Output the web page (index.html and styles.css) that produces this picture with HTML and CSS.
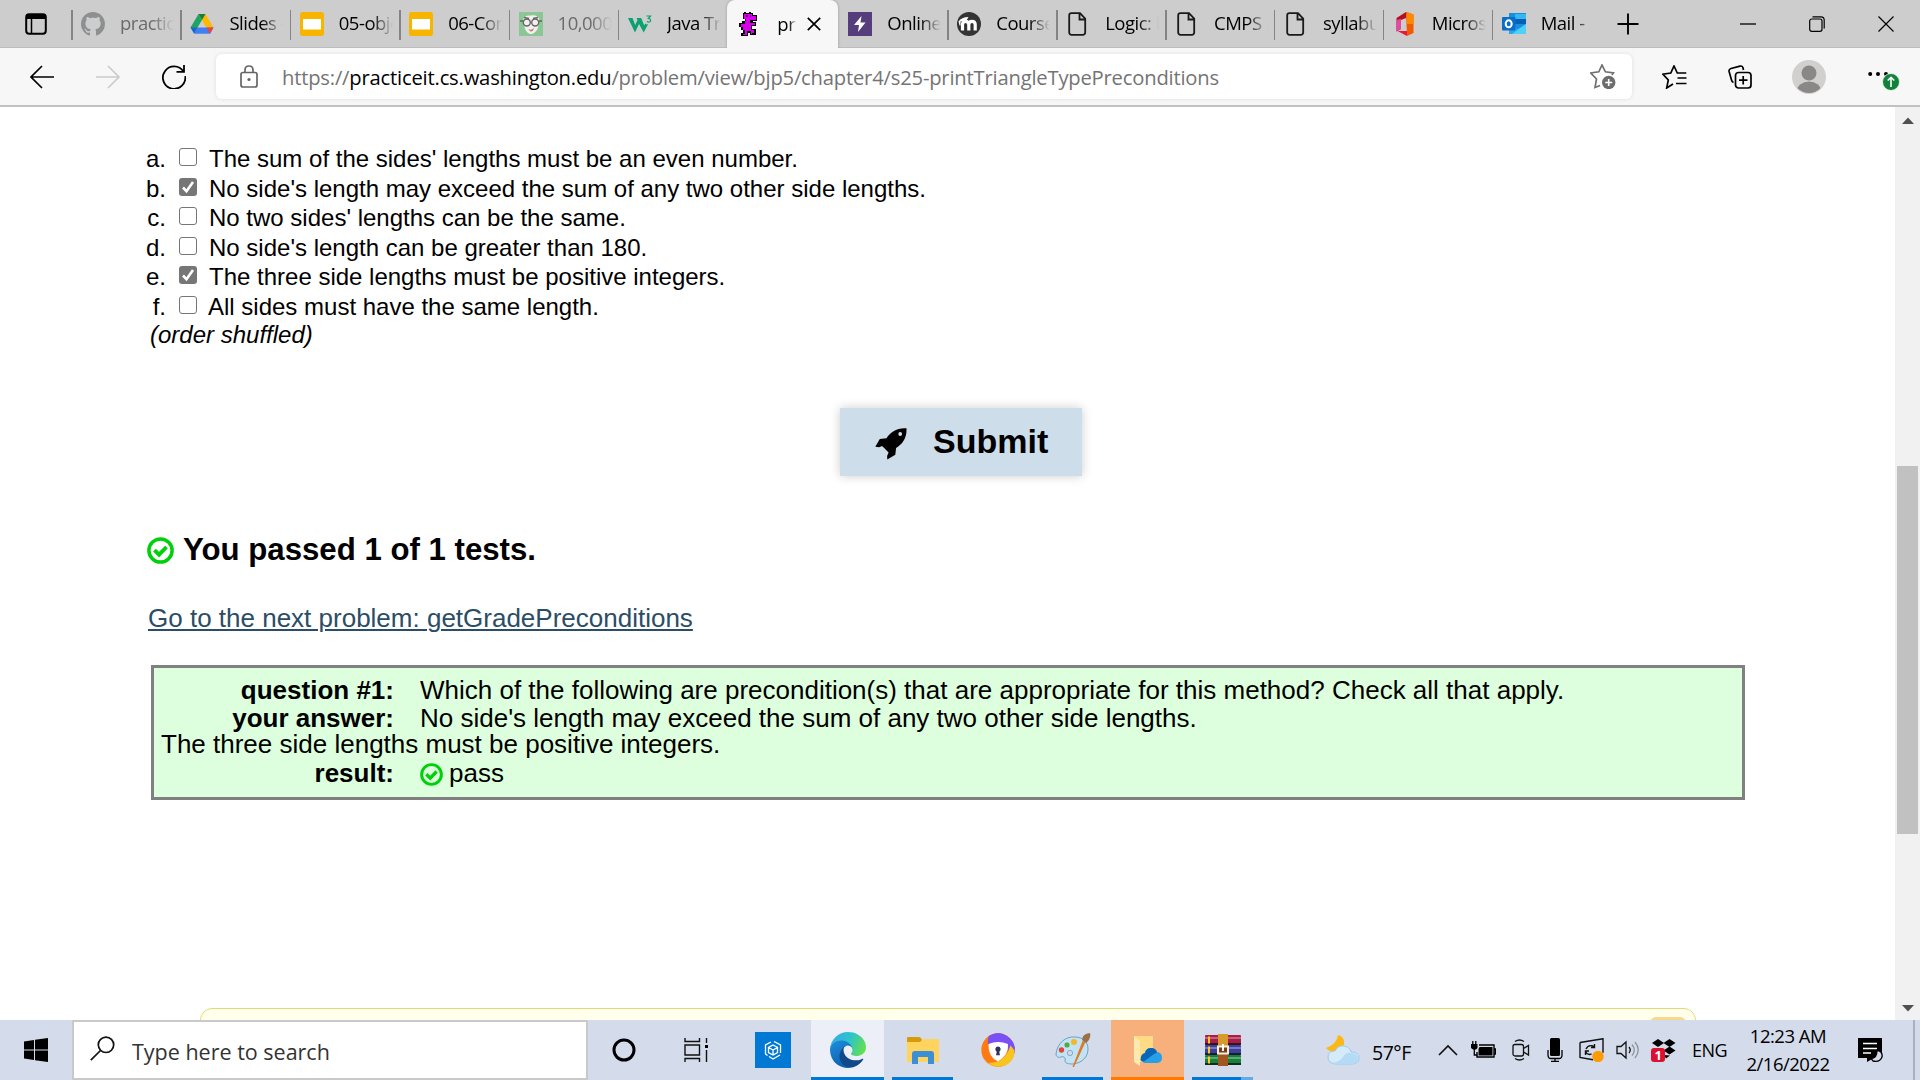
FILE: index.html
```html
<!DOCTYPE html>
<html lang="en">
<head>
<meta charset="utf-8">
<title>Practice-It</title>
<link rel="stylesheet" href="styles.css">
</head>
<body>
<svg class="defs" aria-hidden="true">
  <symbol id="page" viewBox="0 0 24 24"><path d="M5.500 1.200h8.500l5.200 5.500v13.800a2.300 2.300 0 0 1-2.300 2.300H5.500a2.300 2.300 0 0 1-2.300-2.300V3.500a2.300 2.300 0 0 1 2.300-2.300zM13.500 1.200v6.300h5.700" fill="none" stroke="#1a1a1a" stroke-width="1.800"/></symbol>
  <symbol id="slides" viewBox="0 0 24 24"><rect width="24" height="24" rx="2.500" fill="#f7b500"/><rect x="3" y="7" width="18" height="10.500" fill="#fff"/></symbol>
  <symbol id="pass" viewBox="0 0 27 27"><circle cx="13.500" cy="13.500" r="11.600" fill="none" stroke="#00d00a" stroke-width="3.500"/><path d="M7.500 13.200l4.500 4.500 7.500-7.700" fill="none" stroke="#00d00a" stroke-width="3.900"/></symbol>
</svg>

<div class="tabstrip ui">
  <div class="actions"><svg width="22" height="22" viewBox="0 0 22 22"><rect x="1.200" y="1.200" width="19.600" height="19.600" rx="3" fill="none" stroke="#000" stroke-width="2"/><path d="M1 6V3.500Q1 1 3.500 1h15Q21 1 21 3.500V6z"/><path d="M6.500 6v15" stroke="#000" stroke-width="1.500"/></svg></div>
  <div class="tab asleep"><svg class="fav" viewBox="0 0 16 16"><path fill="#8d8f91" d="M8 0C3.580 0 0 3.580 0 8c0 3.540 2.290 6.530 5.470 7.590.4.070.55-.17.55-.38 0-.19-.01-.82-.01-1.490-2.010.37-2.530-.49-2.690-.94-.09-.23-.48-.94-.82-1.130-.28-.15-.68-.52-.01-.53.63-.01 1.080.58 1.230.82.72 1.210 1.870.87 2.330.66.070-.52.28-.87.51-1.070-1.780-.2-3.640-.89-3.640-3.950 0-.87.31-1.590.82-2.150-.08-.2-.36-1.020.08-2.120 0 0 .67-.21 2.200.82.64-.18 1.320-.27 2-.27s1.360.09 2 .27c1.530-1.040 2.200-.82 2.200-.82.44 1.100.16 1.920.08 2.120.51.56.82 1.270.82 2.150 0 3.070-1.870 3.750-3.650 3.950.29.25.54.73.54 1.480 0 1.070-.01 1.930-.01 2.200 0 .21.15.46.55.38A8.010 8.010 0 0 0 16 8c0-4.420-3.580-8-8-8z"/></svg><span>practice</span></div>
  <div class="tab"><svg class="fav" viewBox="0 0 24 24"><path d="M8.500 2h7l-7.800 13.300L4.200 21 .5 15.500z" fill="#1fa463"/><path d="M8.500 2h7L23.500 15.500h-7.300z" fill="#ffba00"/><path d="M15.500 2L12 8 8.500 2z" fill="#15803c"/><path d="M7.500 15.500h16L20 21.800H4.200z" fill="#3f7ef3"/><path d="M16.500 15.500h7L20 21.800z" fill="#e8453c"/><path d="M.5 15.500h7L4.200 21.800z" fill="#1b66d2"/></svg><span>Slides -</span></div>
  <div class="tab"><svg class="fav"><use href="#slides"/></svg><span>05-obje</span></div>
  <div class="tab"><svg class="fav"><use href="#slides"/></svg><span>06-Con</span></div>
  <div class="tab asleep"><svg class="fav" viewBox="0 0 24 24"><rect width="24" height="24" fill="#8bc795"/><path d="M4 8Q5 3 12 3.500 19 2.500 20.500 8l-2 9q-3 5-6.500 5t-6-5z" fill="#f2f0ee"/><g fill="none" stroke="#666" stroke-width="1.400"><circle cx="7.800" cy="10.500" r="3.500"/><circle cx="16.200" cy="10.500" r="3.500"/><path d="M1 9h3M20 9h3M5 5.500l5 1M14 6.500l5-1"/></g><path d="M9 17q3 2 6-1-1 4-3.500 3.500z" fill="#c77"/></svg><span>10,000</span></div>
  <div class="tab"><svg class="fav" viewBox="0 0 24 24"><path d="M0 6h4.500l2.700 7L9.500 8 8.600 6h4.600l3 7.500 1-2 1.500 1 1.500-.5-4.500 8.500L11 12l-4 8.500z" fill="#0aa170"/><path d="M18.500 4h4l-2.200 2.500q2.600.2 2.200 2.500-.8 1.800-3.700.5" fill="none" stroke="#0aa170" stroke-width="1.200"/></svg><span>Java Try</span></div>
  <div class="tab active"><svg class="fav" viewBox="0 0 24 24" shape-rendering="crispEdges"><path d="M6 0h2v1h3V0h2v1h2v2h4v6h-4v1h3v4h-4v3h4v6h-6v-2h-2v3H3v-3h2v-3H3v-3H1v-4h3V9h3V7H5V1h1z"/><path d="M6 2h8v2h4v4h-6v3h5v2h-4v5h3v3h-2v1h-1v-3H9v4H5v-1h2v-4H5v-3H3v-3h4v-3h1V7H6z" fill="#d900ee"/><path d="M8 3h2v2H8zM12 3h1v2h-1z" fill="#6d007a"/></svg><span>pr</span><svg class="x" viewBox="0 0 14 14"><path d="M.8.8l12.400 12.400M13.200.8L.8 13.200" stroke="#000" stroke-width="1.700"/></svg></div>
  <div class="tab first"><svg class="fav" viewBox="0 0 24 24"><rect width="24" height="24" fill="#563d7c"/><path d="M13.500 4L6 13h5l-1 7 7.500-9.500h-5z" fill="#fff"/></svg><span>Online</span></div>
  <div class="tab"><svg class="fav" viewBox="0 0 24 24"><circle cx="12" cy="12" r="12" fill="#333"/><path d="M5.500 18.500v-6q0-3.200 3-3.200t3.300 3.200v6M11.800 12.500q0-3.200 3.200-3.200t3.200 3.200v6" fill="none" stroke="#fff" stroke-width="3.200"/><path d="M1.500 9.500q3-4.500 10-4.500l-2 3.500-6 1v4h-1z" fill="#fff"/></svg><span>Course</span></div>
  <div class="tab"><svg class="fav"><use href="#page"/></svg><span>Logic: I</span></div>
  <div class="tab"><svg class="fav"><use href="#page"/></svg><span>CMPS 2</span></div>
  <div class="tab"><svg class="fav"><use href="#page"/></svg><span>syllabu</span></div>
  <div class="tab"><svg class="fav" viewBox="0 0 24 24"><path d="M13 0l7.500 2.500v18.500L14 24z" fill="#f05a00"/><path d="M13 0v6L8 8v9l-4.500 2.500V6z" fill="#b5101b"/><path d="M3.500 8L8 7v10l-4.500 2.500z" fill="#e04aa0"/><path d="M4.500 19H14v5z" fill="#e8173c"/><path d="M14 0l6.500 2.500V12H14z" fill="#ff8a00"/></svg><span>Micros</span></div>
  <div class="tab"><svg class="fav" viewBox="0 0 24 24"><path d="M7 1h17v21H7z" fill="#1490df"/><path d="M13 2h11v5H13z" fill="#35b8f1"/><path d="M13 7h11v5H13z" fill="#0a5fb4"/><path d="M7 22V12l8.500 5 8.500-5v10z" fill="#28a8ea"/><path d="M24 22V12L10 22z" fill="#50d0f8"/><rect y="5" width="13.500" height="13.500" rx="1" fill="#0a6ec8"/><ellipse cx="6.700" cy="11.800" rx="3" ry="3.500" fill="none" stroke="#fff" stroke-width="2"/></svg><span>Mail -</span></div>
  <div class="newtab"><svg width="22" height="22" viewBox="0 0 22 22"><path d="M11 .5v21M.5 11h21" stroke="#000" stroke-width="1.900"/></svg></div>
  <div class="winctl">
    <svg viewBox="0 0 16 16"><path d="M0 8h16" stroke="#000" stroke-width="1.300"/></svg>
    <svg viewBox="0 0 16 16"><rect x=".7" y="3" width="12.300" height="12.300" rx="2" fill="none" stroke="#000" stroke-width="1.200"/><path d="M3.500.8h8.500q3.200 0 3.200 3.200v8.500" fill="none" stroke="#000" stroke-width="1.200"/></svg>
    <svg viewBox="0 0 16 16"><path d="M.5.5l15 15M15.500.5l-15 15" stroke="#000" stroke-width="1.200"/></svg>
  </div>
</div>

<div class="toolbar ui">
  <svg class="back" viewBox="0 0 24 24"><path d="M24 12H1.500M12 1L1 12l11 11" fill="none" stroke="#000" stroke-width="1.700"/></svg>
  <svg class="fwd" viewBox="0 0 24 24"><path d="M0 12h22.500M12 1l11 11-11 11" fill="none" stroke="#ccc" stroke-width="1.700"/></svg>
  <svg class="reload" viewBox="0 0 24 24"><path d="M21.500 6.500A11.200 11.200 0 1 0 23.200 11M22 0v6.800h-7.500" fill="none" stroke="#000" stroke-width="1.800"/></svg>
  <div class="address">
    <svg class="lock" viewBox="0 0 18 23"><rect x="1" y="7.500" width="16" height="14.500" rx="2" fill="none" stroke="#666" stroke-width="1.700"/><path d="M5 7.500V5q0-4 4-4t4 4v2.500" fill="none" stroke="#666" stroke-width="1.700"/><circle cx="9" cy="14.500" r="1.600" fill="#666"/></svg>
    <span class="url">https://<b>practiceit.cs.washington.edu</b>/problem/view/bjp5/chapter4/s25-printTriangleTypePreconditions</span>
    <svg class="addfav" viewBox="0 0 26 25"><path d="M10 21.500l-5 2L6.500 15 .8 9l8-1.200L12 1l3.400 6.800 8 1.200-1.500 2" fill="none" stroke="#707070" stroke-width="1.700"/><circle cx="18.700" cy="18.500" r="6.700" fill="#6d6d6d"/><path d="M18.700 15v7M15.200 18.500h7" stroke="#fff" stroke-width="1.600"/></svg>
  </div>
  <svg class="favs" viewBox="0 0 25 24"><path d="M11 19l-6.300 4L6.300 15 .8 9.200l8-1.200L12 1l3.300 7h9M15.500 13h9M14 18.500h10.500" fill="none" stroke="#000" stroke-width="1.700"/></svg>
  <svg class="coll" viewBox="0 0 24 24"><rect x="7.500" y="7.500" width="15.500" height="15.500" rx="3" fill="none" stroke="#000" stroke-width="1.700"/><path d="M15.200 11v8.500M11 15.200h8.500M15.500 5l-.6-2.500Q14.200.6 12 1.100L3 3.500Q.6 4.200 1.100 6.500L3.500 15q.5 2 2 2.300" fill="none" stroke="#000" stroke-width="1.700"/></svg>
  <svg class="avatar" viewBox="0 0 34 34"><clipPath id="av"><circle cx="17" cy="17" r="16"/></clipPath><circle cx="17" cy="17" r="17" fill="#d2d0ce"/><g clip-path="url(#av)" fill="#8a8886"><circle cx="17" cy="13" r="7.500"/><ellipse cx="17" cy="31" rx="12" ry="9.500"/></g></svg>
  <svg class="more" viewBox="0 0 32 24"><circle cx="2.200" cy="4" r="2"/><circle cx="10" cy="4" r="2"/><circle cx="18" cy="4" r="2"/><circle cx="23" cy="12" r="8.500" fill="#12823b" stroke="#f7f7f7" stroke-width=".8"/><path d="M23 17V7.500M19.700 10.500L23 7.300l3.300 3.200" fill="none" stroke="#fff" stroke-width="1.600"/></svg>
</div>

<div class="viewport">
  <main>
    <ol class="choices">
      <li><i>a.</i><s></s>The sum of the sides' lengths must be an even number.</li>
      <li><i>b.</i><s class="on"><svg viewBox="0 0 18 18"><path d="M4 9.500l3.500 3.800L14 4" fill="none" stroke="#fff" stroke-width="2.600"/></svg></s>No side's length may exceed the sum of any two other side lengths.</li>
      <li><i>c.</i><s></s>No two sides' lengths can be the same.</li>
      <li><i>d.</i><s></s>No side's length can be greater than 180.</li>
      <li><i>e.</i><s class="on"><svg viewBox="0 0 18 18"><path d="M4 9.500l3.500 3.800L14 4" fill="none" stroke="#fff" stroke-width="2.600"/></svg></s>The three side lengths must be positive integers.</li>
      <li class="last"><i>f.</i><s></s>All sides must have the same length.</li>
    </ol>
    <em class="shuffled">(order shuffled)</em>
    <div class="submit"><svg viewBox="0 0 32 32"><path d="M31.500.3C22-.5 15 4.500 11.500 10.200L4.800 11 .3 18.700l3.800.5 3-1.200 6.500 6.500-1.500 3.500.2 3.500 8-4.800.8-6.700C27.500 16 32 10 31.500.3z"/><circle cx="25.200" cy="6" r="1.900" fill="#cddde9"/></svg><span>Submit</span></div>
    <h3><svg class="ok"><use href="#pass"/></svg>You passed 1 of 1 tests.</h3>
    <a class="next">Go to the next problem: getGradePreconditions</a>
    <section class="result">
      <div class="row r1"><b>question #1:</b><span>Which of the following are precondition(s) that are appropriate for this method? Check all that apply.</span></div>
      <div class="row r2"><b>your answer:</b><span>No side's length may exceed the sum of any two other side lengths.</span></div>
      <div class="row r3">The three side lengths must be positive integers.</div>
      <div class="row"><b>result:</b><span><svg class="ok"><use href="#pass"/></svg>pass</span></div>
    </section>
    <div class="notice"><div></div></div>
  </main>
  <div class="scroll">
    <svg viewBox="0 0 12 7"><path d="M0 7l6-6.500L12 7z" fill="#505050"/></svg>
    <div class="thumb"></div>
    <svg viewBox="0 0 12 7"><path d="M0 0l6 6.500L12 0z" fill="#505050"/></svg>
  </div>
</div>

<div class="taskbar ui">
  <div class="start"><svg width="24" height="24" viewBox="0 0 24 24"><path d="M0 3.400L10 2v9.500H0zM11 1.800L24 0v11.500H11zM0 12.500h10V22L0 20.600zM11 12.500h13V24l-13-1.800z"/></svg></div>
  <div class="search"><svg width="25" height="25" viewBox="0 0 25 25"><circle cx="16" cy="8.800" r="7.700" fill="none" stroke="#111" stroke-width="1.700"/><path d="M10.500 14.500L.8 24.200" stroke="#111" stroke-width="1.700"/></svg><span>Type here to search</span></div>
  <div class="apps">
    <div class="app cortana"><svg width="24" height="24" viewBox="0 0 24 24"><circle cx="12" cy="12" r="10" fill="none" stroke="#000" stroke-width="3"/></svg></div>
    <div class="app views"><svg width="24" height="24" viewBox="0 0 24 24"><path d="M1 0v3.500h14.500V0M1 24v-3.500h14.500V24M1 7h14.500v10H1zM22.500 0v5M22.500 12v12" fill="none" stroke="#111" stroke-width="1.400"/><path d="M21 7h3v3h-3z"/></svg></div>
    <div class="app"><svg width="36" height="36" viewBox="0 0 36 36"><path fill="#0078d4" d="M0 0h36v36H0z"/><path d="M16 10l-5.500 3v9l2 1.500M19 9.500l6.500 3.500v8M25 23l-7 4-4-2.500M18 13l4.500 2.500v5L18 23l-4.500-2.500v-5zM13.500 15.500L18 18l4.500-2.500M18 18v5" fill="none" stroke="#fff" stroke-width="1.300"/></svg></div>
    <div class="app edge"><svg width="36" height="36" viewBox="0 0 256 256">
      <defs>
        <linearGradient id="e1" x1="0" y1=".3" x2="1" y2=".6"><stop offset="0" stop-color="#35a9e8"/><stop offset=".5" stop-color="#2cc4cc"/><stop offset="1" stop-color="#66e04c"/></linearGradient>
        <linearGradient id="e2" x1=".2" y1="0" x2=".6" y2="1"><stop offset="0" stop-color="#1b8fdc"/><stop offset="1" stop-color="#0f5cab"/></linearGradient>
      </defs>
      <path d="M231 190.500c-3.400 1.800-6.900 3.400-10.500 4.700a101.700 101.700 0 0 1-35.900 6.500c-47.300 0-88.500-32.500-88.500-74.300 0-11.400 6.400-21.900 16.400-27.300-42.800 1.800-53.800 46.400-53.800 72.500 0 73.900 68.100 81.400 82.800 81.400 7.900 0 19.800-2.300 27-4.600l1.300-.4a128.300 128.300 0 0 0 66.600-52.800 4 4 0 0 0-5.400-5.700z" fill="#11488a"/>
      <path d="M105.700 241.400a79.200 79.200 0 0 1-22.700-21.300 80.700 80.700 0 0 1 29.500-120c3.200-1.500 8.500-4.100 15.600-4a32.400 32.400 0 0 1 25.700 13 31.900 31.900 0 0 1 6.300 18.700c0-.2 24.500-79.600-80-79.600-43.900 0-80 41.700-80 78.200a130.200 130.200 0 0 0 12.100 56 128 128 0 0 0 156.400 67 75.500 75.500 0 0 1-62.800-8z" fill="url(#e2)"/>
      <path d="M152.300 148.900c-.8 1-3.300 2.500-3.300 5.700 0 2.600 1.700 5.100 4.700 7.200 14.400 10 41.500 8.700 41.600 8.700a59.600 59.600 0 0 0 30.300-8.300 61.400 61.400 0 0 0 30.400-52.900c.3-22.400-8-37.300-11.300-43.900C223.500 23.900 177.700 0 128 0A128 128 0 0 0 0 126.200c.5-36.500 36.800-66 80-66 3.500 0 23.500.3 42 10.100 16.300 8.600 24.900 18.900 30.800 29.200 6.200 10.700 7.300 24.100 7.300 29.500 0 5.300-2.700 13.300-7.800 19.900z" fill="url(#e1)"/></svg></div>
    <div class="app open"><svg width="32" height="27" viewBox="0 0 32 27"><path d="M0 1q0-1 1-1h11q2 0 3 3v4H0z" fill="#d99a07"/><path d="M0 5h13l3-3h15q1 0 1 1v21q0 1-1 1H1q-1 0-1-1z" fill="#ffd45e"/><path d="M5 27V17q0-3 3-3h16q3 0 3 3v10h-6v-7H11v7z" fill="#3a8fd6"/></svg></div>
    <div class="app"><svg width="34" height="34" viewBox="0 0 34 34"><circle cx="17" cy="17" r="16.700" fill="#ff7a12"/><path d="M8 3A16.700 16.700 0 0 1 33.500 20l-4 3Q27 12 18 9 12 7.500 7.500 12 6 7 8 3z" fill="#7a4ff5"/><path d="M33.700 17Q33 33 17 33.700q-6-.3-9.500-4Q20 31 27 19l3-8q3.500 2 3.700 6z" fill="#f7c51e"/><path d="M8 3A16.700 16.700 0 0 1 33.700 18Q30 12 27 10.500L17 9l-9.500 2z" fill="#7a4ff5"/><path d="M7.500 11Q17 7 27 11q1 11-10 17.500Q7 24 7.500 11z" fill="#fff"/><path d="M17 13.500a2.800 2.800 0 0 1 1.300 5.200l.6 3.600h-3.800l.6-3.600a2.800 2.800 0 0 1 1.300-5.200z" fill="#2b3458"/></svg></div>
    <div class="app open"><svg width="36" height="36" viewBox="0 0 36 36"><path d="M20 5C10 4 2 12 1 22c0 3 3 4 5 3 3-1 5 1 4 4 0 2 3 3 8 3 9-1 15-7 15-15 0-7-5-12-13-12z" fill="#c3e2f3" stroke="#6aa3c4" stroke-width="1"/><circle cx="15" cy="21" r="2.600" fill="#d4dbea" stroke="#7faac3"/><rect x="9.500" y="10.500" width="5" height="5" rx="2" fill="#4cae3d"/><circle cx="19" cy="10" r="3" fill="#f4b728"/><circle cx="6.500" cy="18" r="2.700" fill="#e0463a"/><path d="M17.500 35l10-26 3 1-11.500 25z" fill="#e07a24"/><path d="M27 8Q27 2 35 1q1.500 5-4 10z" fill="#9b7048"/></svg></div>
    <div class="app drive"><svg width="30" height="32" viewBox="0 0 30 32"><path d="M1 2h19v26H7z" fill="#ffdb85"/><path d="M1 2l6 5v25l-6-4z" fill="#ffe9ae"/><path d="M12 29a5 5 0 0 1-.5-9.500Q13 14 18 14q4.500 0 6 4 5 .5 5 5.500t-5 5.500z" fill="#28a0e8"/><path d="M7.500 26q0-6 4.500-7 1-5 6-5 5 0 6 4.500l-3 1.500-10 7.500q-3 0-3.500-1.500z" fill="#0a66b8"/></svg></div>
    <div class="app open rar"><svg width="36" height="32" viewBox="0 0 36 32"><rect y="1" width="36" height="10" rx="1" fill="#a91e46"/><rect y="11" width="36" height="10" rx="1" fill="#3d3f9c"/><rect y="21" width="36" height="10" rx="1" fill="#17803a"/><path d="M0 4h36M0 14h36M0 24h36" stroke="#fff" stroke-opacity=".3" stroke-width="2"/><path d="M0 10h36M0 20h36M0 30h36" stroke="#111" stroke-width="1.500"/><path d="M4 2.500v7M4 12.500v7M4 22.500v7" stroke="#ffc928" stroke-width="2"/><path d="M13 0h10v12H13z" fill="#d79a2c"/><path d="M13 19h10v13H13z" fill="#a3561f"/><rect x="13" y="12.500" width="10" height="7" fill="#7a3d14" stroke="#f3efe0" stroke-width="2"/><path d="M18 10v7" stroke="#fff" stroke-width="2"/></svg></div>
  </div>
  <div class="tray">
    <svg class="weather" width="34" height="30" viewBox="0 0 34 30"><path d="M12 0q-1 9-12 13 4 5 12 3 7-3 6-10-1-5-6-6z" fill="#fcb813"/><path d="M9 29q-7-1-7-7t7-6q3-6 9-5 6 1 7 6 8 0 8 6 0 5-6 6z" fill="#d5ebfa" stroke="#9bcbec" stroke-width="1"/><path d="M5 28q9-1 12-6 3-5 8-4 7 1 7 5 0 5-5 6H9z" fill="#b4dbf5"/></svg>
    <span class="temp">57°F</span>
    <svg class="chev" width="20" height="12" viewBox="0 0 20 12"><path d="M1 11l9-9 9 9" fill="none" stroke="#111" stroke-width="1.600"/></svg>
    <svg class="batt" width="25" height="18" viewBox="0 0 25 18"><path d="M8 4h15v12H6v-5M23 8h1.500v5H23" fill="none" stroke="#000" stroke-width="1.400"/><path d="M8.500 6H21.500v8.500H7.500V8zM0 3h6.500v4L5 8.500H2L0 7z"/><path d="M1.800 0v4M4.800 0v4M3.300 8v6h3" fill="none" stroke="#000" stroke-width="1.300"/></svg>
    <svg class="cam" width="18" height="22" viewBox="0 0 18 22"><rect x="1" y="5.500" width="10.500" height="11.500" rx="2" fill="none" stroke="#111" stroke-width="1.300"/><path d="M11.500 9.500l5-3v9.500l-5-3M3 2.500q4.500-3 9 0M3 19.500q4.500 3 9 0" fill="none" stroke="#111" stroke-width="1.300"/></svg>
    <svg class="mic" width="16" height="24" viewBox="0 0 16 24"><rect x="3" width="10" height="18" rx="1.500"/><path d="M1 12v5q0 3.500 3 3.500h8q3 0 3-3.500v-5M8 20.500V24M4 23.300h8" fill="none" stroke="#000" stroke-width="1.300"/></svg>
    <svg class="upd" width="25" height="24" viewBox="0 0 25 24"><path d="M1 4.500l23-3.800v14M1 4.500v15l13 2.300" fill="none" stroke="#111" stroke-width="1.400"/><path d="M7 11q2-4.500 7-3l1.500 1.500M15.500 6v3.500H12M6.500 17v-4H10M6.500 13.500q2 4 6 2.500" fill="none" stroke="#111" stroke-width="1.400"/><circle cx="19" cy="18.500" r="5.700" fill="#ff9a00"/></svg>
    <svg class="vol" width="24" height="20" viewBox="0 0 24 20"><path d="M1 6.500h4L10 2v16l-5-4.500H1z" fill="none" stroke="#111" stroke-width="1.300"/><path d="M13 7q2.500 3 0 6" fill="none" stroke="#111" stroke-width="1.300"/><path d="M16 4.500q4.500 5.500 0 11M19 2q6.500 8 0 16" fill="none" stroke="#8f94a0" stroke-width="1.300"/></svg>
    <svg class="dbx" width="25" height="24" viewBox="0 0 25 24"><path d="M1 5l6-4 6 4-6 4zM12.500 5l6-4 6 4-6 4zM12.500 12.500l6-4 6 4-6 4zM13 17l6 .5-4 3z"/><rect y="10" width="14" height="14" rx="3" fill="#dc1030"/><text x="7" y="21.500" text-anchor="middle" class="badge">1</text></svg>
    <span class="lang">ENG</span>
    <div class="clock"><span>12:23 AM</span><span class="date">2/16/2022</span></div>
    <svg class="note" width="25" height="25" viewBox="0 0 25 25"><path d="M0 0h24v20h-8l-7 4v-4H0z"/><path d="M5 5.500h14M5 10.500h14M5 15h8" stroke="#fff" stroke-width="1.400"/><path d="M19 12q6 1.500 5 7-2 5.500-9 4l-2-2.500q6 0 6-8.500z" fill="#d4dbea" stroke="#000" stroke-width="1.300"/></svg>
  </div>
</div>
</body>
</html>
```
FILE: styles.css
```css
* { box-sizing: border-box; }
html, body { margin: 0; height: 100%; overflow: hidden; }
body { width: 1920px; height: 1080px; display: flex; flex-direction: column; background: #fff; color: #000; font-family: "Liberation Sans", Arial, sans-serif; }
svg { display: block; flex: none; }
.defs { display: none; }
.ui { font-family: "Open Sans", "Noto Sans", sans-serif; }

.tabstrip { height: 48px; flex: none; display: flex; align-items: stretch; background: #cdcdcd; border-bottom: 1px solid #bdbdbd; }
.actions { width: 71px; padding: 13px 0 0 25px; }
.tab { width: 109.4px; display: flex; align-items: center; position: relative; padding-left: 10px; font-size: 18.5px; letter-spacing: -.5px; white-space: nowrap; }
.tab::before { content: ""; position: absolute; left: 0; top: 10px; width: 1.5px; height: 30px; background: #848484; }
.fav { width: 24px; height: 24px; }
.tab span { width: 55px; margin: -2px 0 0 15px; overflow: hidden; -webkit-mask-image: linear-gradient(90deg, #000 60%, transparent 98%); mask-image: linear-gradient(90deg, #000 60%, transparent 98%); }
.asleep span { color: #6b6b6b; }
.active { width: 111px; height: 48px; padding-left: 11px; background: #f7f7f7; border-radius: 8px 8px 0 0; box-shadow: 0 0 3px rgba(0, 0, 0, .25); clip-path: inset(0 -4px 0 -4px); }
.active::before, .first::before { display: none; }
.active span { width: 20px; margin-left: 15px; }
.active .x { width: 14px; height: 14px; margin-left: 10px; }
.active ~ .tab { width: 108.9px; }
.newtab { width: 139px; padding: 13px 0 0 16px; }
.winctl { display: flex; align-items: center; gap: 53px; }
.winctl svg { width: 16px; height: 16px; }

.toolbar { height: 59px; flex: none; display: flex; align-items: center; padding-left: 30px; background: #f7f7f7; border-bottom: 2px solid #c1c1c1; }
.back, .fwd, .reload { width: 24px; height: 24px; }
.fwd { margin-left: 42px; }
.reload { margin-left: 42px; }
.address { width: 1416px; height: 45px; margin-left: 30px; padding: 0 16px 0 24px; display: flex; align-items: center; background: #fff; border-radius: 6px; box-shadow: 0 0 4px rgba(0, 0, 0, .1); }
.lock { width: 18px; height: 23px; margin-right: 24px; }
.url { flex: 1; color: #747474; font-size: 20.2px; letter-spacing: -.19px; white-space: nowrap; }
.url b { color: #000; font-weight: 400; }
.addfav { width: 26px; height: 25px; }
.favs { width: 25px; height: 24px; margin-left: 30px; }
.coll { width: 24px; height: 24px; margin-left: 41px; }
.avatar { width: 34px; height: 34px; margin-left: 40px; }
.more { width: 32px; height: 24px; margin: 10px 0 0 42px; }

.viewport { height: 913px; flex: none; display: flex; }
main { width: 1895px; height: 913px; overflow: hidden; display: flex; flex-direction: column; align-items: flex-start; }
main > * { flex: none; }
.choices { list-style: none; margin: 38px 0 0 140px; padding: 0; font-size: 24px; }
.choices li { height: 29.6px; line-height: 27px; display: flex; white-space: nowrap; }
.choices i { width: 26px; font-style: normal; text-align: right; }
.choices s { width: 18px; height: 18px; margin: 3px 12px 0 13px; border: 1.5px solid #767676; border-radius: 3px; }
.choices .last s { margin-right: 11px; }
.choices .on { border: 0; background: #767676; }
.shuffled { margin: -2px 0 0 150px; font-size: 24px; line-height: 28px; }
.submit { width: 242px; height: 68px; margin: 59px 0 0 840px; padding-left: 35px; display: flex; align-items: center; background: #cddde9; box-shadow: 0 0 10px rgba(0, 0, 0, .2); font-size: 34px; font-weight: 700; }
.submit svg { width: 32px; height: 32px; margin: 4px 26px 0 0; }
h3 { margin: 56px 0 0 147px; height: 36px; display: flex; align-items: center; font-size: 31.2px; line-height: 36px; }
.ok { width: 27px; height: 27px; }
h3 .ok { margin: 2px 9px 0 0; }
.next { margin: 35px 0 0 148px; font-size: 26px; line-height: 30px; color: #2b4d66; text-decoration: underline; text-decoration-thickness: 2px; text-underline-offset: 2px; }
.result { width: 1594px; height: 135px; margin: 32px 0 0 151px; padding: 9px 0 0 7px; border: 3px solid #808080; background: #ddffdd; font-size: 26px; line-height: 26px; }
.row { display: flex; white-space: nowrap; }
.row b { width: 233px; margin-right: 26px; text-align: right; }
.row span { display: flex; }
.row .ok { width: 23px; height: 23px; margin: 3px 6px 0 0; }
.r1 { height: 28px; }
.r3 { height: 29px; }
.notice { width: 1496px; height: 40px; margin: 208px 0 0 200px; padding: 8px 9px 0; display: flex; justify-content: flex-end; border: 1px solid #dddd7a; border-radius: 12px; background: #ffffec; }
.notice div { width: 36px; height: 20px; border-radius: 6px; background: #f7d88c; }
.scroll { width: 25px; background: #f1f1f1; display: flex; flex-direction: column; align-items: center; padding: 10px 0 8px; }
.scroll svg { width: 12px; height: 7px; }
.thumb { width: 21px; height: 368px; margin: 342px 0 auto; background: #c1c1c1; }

.taskbar { height: 60px; flex: none; display: flex; background: #d4dbea; }
.start { width: 72px; padding: 18px 0 0 24px; }
.search { width: 516px; border: 2px solid #c9c9c9; background: #fff; display: flex; align-items: center; padding-left: 16px; color: #333; font-size: 21.500px; }
.search svg { margin: -3px 17px 0 0; }
.search span { margin-top: 2px; }
.apps { display: flex; }
.app { width: 73px; margin-right: 2px; height: 60px; display: flex; align-items: center; justify-content: center; position: relative; }
.apps .cortana { margin: 0 -1px 0 -1px; }
.apps .views { margin-right: 4px; }
.open::after, .edge::after, .drive::after { content: ""; position: absolute; left: 6px; right: 6px; bottom: 0; height: 3px; background: #0078d7; }
.edge { background: #eceff7; }
.edge::after { left: 0; right: 0; }
.drive { background: #f7b07c; }
.drive::after { left: 0; right: 0; background: #ff7a00; }
.rar::after { background: linear-gradient(90deg, #0078d7 80%, #64abe5 80%); }
.tray { margin-left: auto; display: flex; align-items: center; padding-right: 6px; border-right: 2px solid #aab0bd; margin-right: 5px; font-size: 18.500px; letter-spacing: -.5px; }
.temp { width: 40px; margin: 4px 26px 0 12px; font-size: 19.500px; }
.batt { margin-left: 13px; }
.cam { margin-left: 16px; }
.mic { margin-left: 17px; }
.upd { margin-left: 16px; }
.vol { margin-left: 12px; }
.dbx { margin-left: 11px; }
.badge { font: 700 13px "Open Sans", sans-serif; fill: #fff; }
.lang { width: 34px; margin: 0 0 0 16px; font-size: 18px; }
.clock { width: 84px; margin: 0 28px 0 20px; display: flex; flex-direction: column; align-items: center; line-height: 28px; }
.note { margin-right: 24px; }
```
